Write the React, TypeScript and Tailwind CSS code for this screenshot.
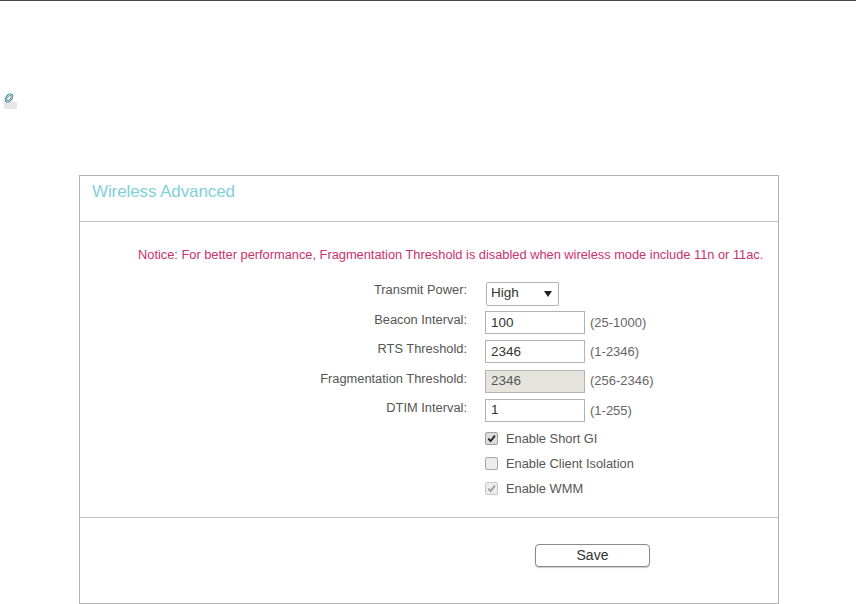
import React from 'react';

const fields = [
  { label: 'Beacon Interval:', value: '100', hint: '(25-1000)' },
  { label: 'RTS Threshold:', value: '2346', hint: '(1-2346)' },
  { label: 'Fragmentation Threshold:', value: '2346', hint: '(256-2346)', disabled: true },
  { label: 'DTIM Interval:', value: '1', hint: '(1-255)' },
];

const Check = ({ color }: { color: string }) => (
  <svg width="9" height="9" viewBox="0 0 10 10" fill="none">
    <path d="M1.5 5.2 L4 8 L8.8 1.8" stroke={color} strokeWidth="2" />
  </svg>
);

const App: React.FC = () => {
  return (
    <div className="w-[856px] h-[604px] overflow-hidden bg-white font-['Liberation_Sans',Arial,sans-serif]">
      <div className="h-px bg-[#444a50]" />

      {/* Attachment icon */}
      <div className="mt-[92px] ml-1 w-[13px] h-4 relative">
        <div className="absolute left-0 bottom-0 w-[13px] h-[7px] bg-[#e6e6e6]" />
        <svg className="absolute left-0 top-0" width="10" height="10" viewBox="0 0 10 10" fill="none">
          <ellipse cx="5" cy="5" rx="3" ry="4.6" transform="rotate(40 5 5)" stroke="#3f8a9e" strokeWidth="1.1" />
          <ellipse cx="5" cy="5" rx="1.5" ry="3" transform="rotate(40 5 5)" stroke="#6f8c9c" strokeWidth="1" />
        </svg>
      </div>

      <div className="mt-[66px] ml-[79px] w-[700px] h-[429px] border border-[#b3b3b3] flex flex-col">
        <div className="h-[46px] border-b border-[#c4c4c4] pl-3 pt-1 shrink-0">
          <h1 className="text-[17px] leading-[24px] text-[#7fd0da] tracking-[-0.1px]">Wireless Advanced</h1>
        </div>

        <div className="h-[296px] shrink-0 border-b border-[#c4c4c4] flex flex-col">
          <p className="mt-[26px] ml-[58px] text-[12.82px] leading-[14px] text-[#c8326e] whitespace-nowrap">
            Notice: For better performance, Fragmentation Threshold is disabled when wireless mode include 11n or 11ac.
          </p>

          <div className="mt-[17px] flex flex-col text-[12.85px] text-[#555]">
            <div className="flex items-center h-[29px]">
              <span className="w-[387px] text-right mb-2">Transmit Power:</span>
              <div className="ml-[19px] w-[73px] h-[24px] border border-[#b3b3b3] rounded-[2px] flex items-center justify-between pl-1 pr-[6px] text-[13.5px] text-[#333]">
                <span>High</span>
                <span className="w-0 h-0 border-x-[4px] border-x-transparent border-t-[6px] border-t-[#222]" />
              </div>
            </div>

            {fields.map((f) => (
              <div key={f.label} className="flex items-center h-[29.3px]">
                <span className="w-[387px] text-right mb-[6px]">{f.label}</span>
                <div
                  className={`ml-[18px] w-[100px] h-[23px] border border-[#b3b3b3] flex items-center pl-[5px] text-[13.5px] ${
                    f.disabled ? 'bg-[#e6e5dd] text-[#555]' : 'bg-white text-[#333]'
                  }`}
                >
                  {f.value}
                </div>
                <span className="ml-[5px] text-[13px] text-[#666]">{f.hint}</span>
              </div>
            ))}

            <div className="mt-[1px] ml-[405px] flex items-center gap-2 h-[25px]">
              <span className="w-[13px] h-[13px] rounded-[2px] border border-[#a0a0a0] bg-[#dcdcdc] flex items-center justify-center">
                <Check color="#222" />
              </span>
              <span>Enable Short GI</span>
            </div>
            <div className="ml-[405px] flex items-center gap-2 h-[25px]">
              <span className="w-[13px] h-[13px] rounded-[2px] border border-[#a8a8a8] bg-[#ececec]" />
              <span>Enable Client Isolation</span>
            </div>
            <div className="ml-[405px] flex items-center gap-2 h-[25px]">
              <span className="w-[13px] h-[13px] rounded-[2px] border border-[#c8c8c8] bg-[#ececec] flex items-center justify-center">
                <Check color="#9a9a9a" />
              </span>
              <span>Enable WMM</span>
            </div>
          </div>
        </div>

        <div className="pt-[25px] pl-[455px]">
          <button className="w-[115px] h-[23px] border border-[#8a8a8a] rounded-[4px] bg-white text-[14px] leading-none text-[#333] shadow-[0_1px_1px_rgba(0,0,0,0.2)]">
            Save
          </button>
        </div>
      </div>
    </div>
  );
};

export default App;
